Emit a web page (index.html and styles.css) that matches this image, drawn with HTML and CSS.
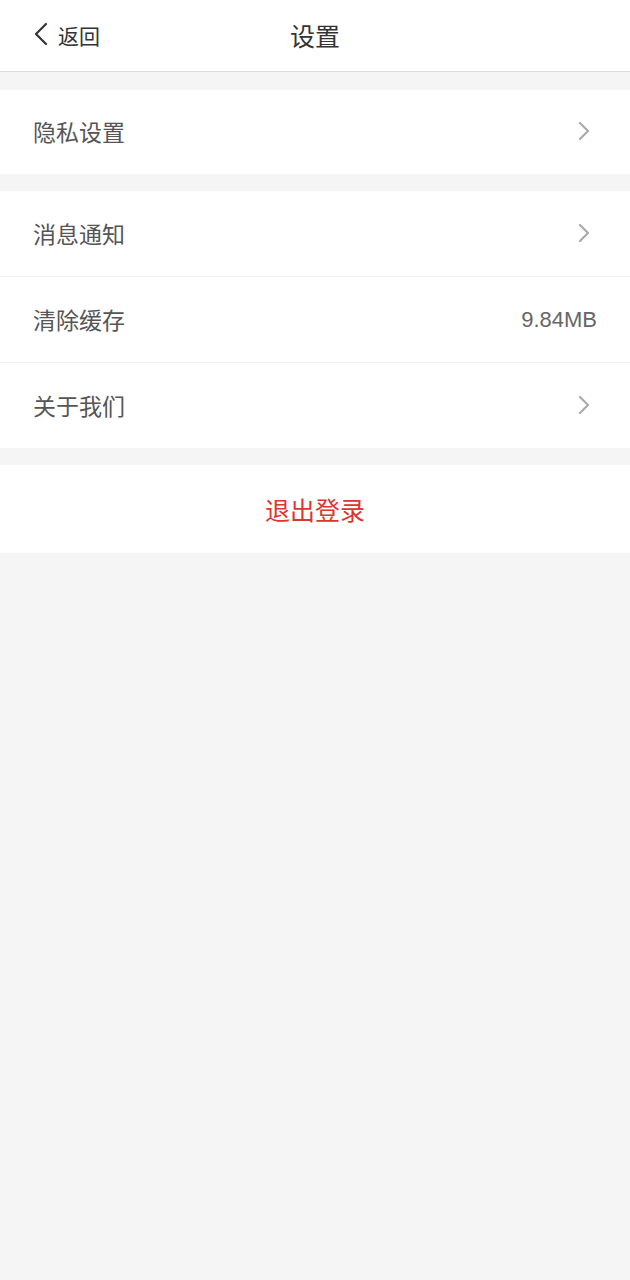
FILE: index.html
```html
<!DOCTYPE html>
<html lang="zh">
<head>
<meta charset="utf-8">
<link rel="stylesheet" href="styles.css">
</head>
<body>
<header class="nav">
  <div class="back">
    <svg class="back-icon" width="14" height="24" viewBox="0 0 14 24"><path d="M12 2 L2 12 L12 22" fill="none" stroke="#333" stroke-width="2.2" stroke-linecap="round" stroke-linejoin="round"/></svg>
    <span class="back-text">返回</span>
  </div>
  <div class="title">设置</div>
</header>
<main>
  <section class="group">
    <div class="row"><span class="label">隐私设置</span><svg class="arrow" width="12" height="20" viewBox="0 0 12 20"><path d="M2 2 L10 10 L2 18" fill="none" stroke="#aaa" stroke-width="2.2" stroke-linecap="round" stroke-linejoin="round"/></svg></div>
  </section>
  <section class="group">
    <div class="row"><span class="label">消息通知</span><svg class="arrow" width="12" height="20" viewBox="0 0 12 20"><path d="M2 2 L10 10 L2 18" fill="none" stroke="#aaa" stroke-width="2.2" stroke-linecap="round" stroke-linejoin="round"/></svg></div>
    <div class="row"><span class="label">清除缓存</span><span class="value">9.84MB</span></div>
    <div class="row"><span class="label">关于我们</span><svg class="arrow" width="12" height="20" viewBox="0 0 12 20"><path d="M2 2 L10 10 L2 18" fill="none" stroke="#aaa" stroke-width="2.2" stroke-linecap="round" stroke-linejoin="round"/></svg></div>
  </section>
  <section class="group">
    <div class="logout">退出登录</div>
  </section>
</main>
</body>
</html>
```
FILE: styles.css
```css
html, body {
  margin: 0;
  padding: 0;
  background: #f5f5f5;
  font-family: "Noto Sans CJK SC", "Noto Sans", sans-serif;
}
.nav {
  height: 71px;
  background: #fff;
  border-bottom: 1px solid #dcdcdc;
  position: relative;
  display: flex;
  align-items: center;
  justify-content: center;
}
.back {
  position: absolute;
  left: 34px;
  top: 0;
  height: 71px;
  display: flex;
  align-items: center;
  gap: 10px;
}
.back-icon {
  margin-top: -4px;
}
.back-text {
  font-size: 21px;
  color: #333;
  margin-top: -2px;
}
.title {
  font-size: 25px;
  color: #333;
  margin-top: -1px;
}
main {
  padding-top: 18px;
}
.group {
  background: #fff;
  margin-bottom: 17px;
}
.row {
  height: 85px;
  padding: 0 34px 0 33px;
  display: flex;
  align-items: center;
  justify-content: space-between;
  border-bottom: 1px solid #f2f2f2;
}
.row:last-child {
  border-bottom: none;
}
.group:first-child .row {
  height: 84px;
}
.label {
  font-size: 23px;
  color: #555;
  margin-top: -2px;
}
.arrow {
  margin-right: 6px;
  margin-top: -2px;
}
.value {
  font-size: 22px;
  color: #666;
  font-family: "Liberation Sans", "Noto Sans", sans-serif;
  margin-right: -1px;
}
.logout {
  height: 88px;
  display: flex;
  align-items: center;
  justify-content: center;
  font-size: 25px;
  color: #dc3630;
}
```
